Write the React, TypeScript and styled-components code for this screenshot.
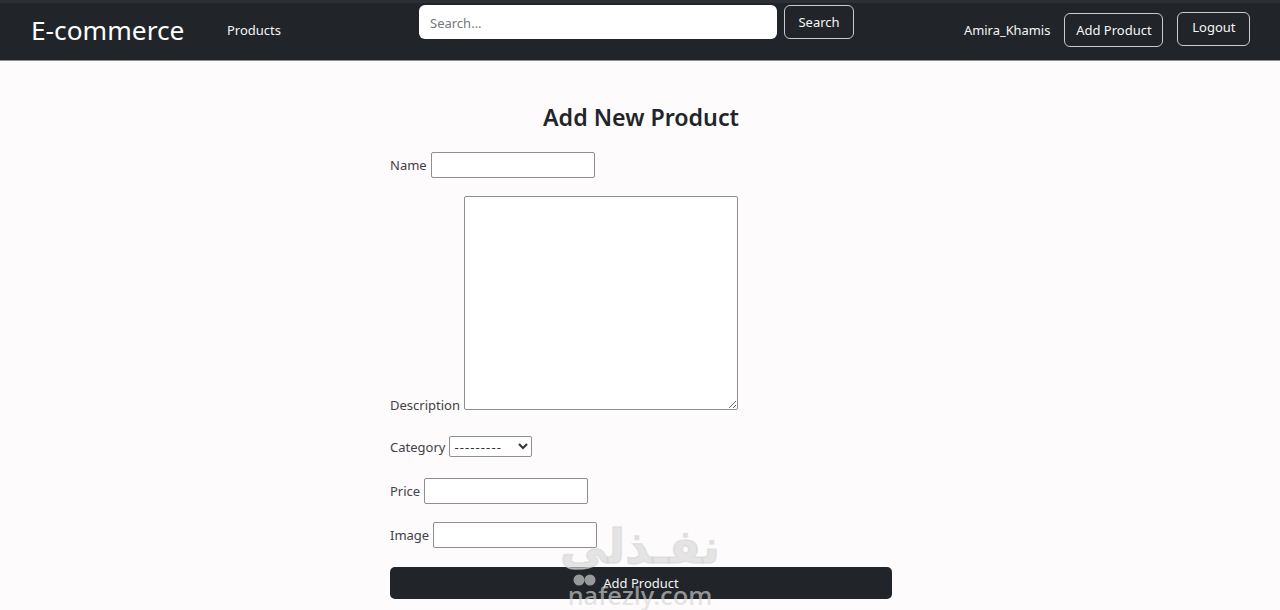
import React from 'react';
import styled, { createGlobalStyle } from 'styled-components';

const GlobalStyle = createGlobalStyle`
  html, body {
    margin: 0;
    padding: 0;
    background: #fdfbfc;
    font-family: "Noto Sans", "Open Sans", sans-serif;
    color: #3a3d41;
    overflow: hidden;
  }
`;

const Page = styled.div`
  width: 1280px;
  height: 610px;
  position: relative;
  overflow: hidden;
`;

const Navbar = styled.nav`
  height: 57px;
  border-top: 3px solid #2c2f33;
  border-bottom: 1px solid #8b8d90;
  background: #212529;
  display: flex;
  align-items: flex-start;
  color: #f4f5f6;
  box-sizing: content-box;
`;

const Brand = styled.a`
  margin: 8px 0 0 31px;
  width: 196px;
  font-size: 26.3px;
  line-height: 38px;
  color: #fff;
`;

const NavLink = styled.a`
  margin-top: 16px;
  width: 192px;
  font-size: 13px;
  line-height: 22px;
`;

const SearchForm = styled.form`
  display: flex;
  gap: 7px;
  margin-top: 2px;
`;

const SearchInput = styled.input`
  width: 358px;
  height: 34px;
  box-sizing: border-box;
  border: 0;
  border-radius: 6px;
  background: #fff;
  padding: 2px 11px 0;
  font: 13px "Noto Sans", sans-serif;
  &::placeholder {
    color: #73787d;
  }
`;

const NavButton = styled.button<{ $width: number; $top: number; $lift?: number }>`
  width: ${(p) => p.$width}px;
  height: 34px;
  margin-top: ${(p) => p.$top}px;
  box-sizing: border-box;
  border: 1px solid #c9cbcd;
  border-radius: 6px;
  background: transparent;
  color: #f4f5f6;
  font: 13px "Noto Sans", sans-serif;
  padding: 0 0 ${(p) => p.$lift ?? 0}px;
`;

const NavRight = styled.div`
  margin-left: 110px;
  display: flex;
  align-items: flex-start;
  gap: 14px;
`;

const UserName = styled.span`
  margin-top: 16px;
  font-size: 12.9px;
  line-height: 22px;
`;

const Content = styled.main`
  width: 502px;
  margin: 0 0 0 390px;
  padding-top: 40px;
`;

const Title = styled.h1`
  margin: 0 0 19px;
  font-size: 23.2px;
  line-height: 32px;
  font-weight: 600;
  color: #212529;
  text-align: center;
`;

const Row = styled.div<{ $gap: number }>`
  display: flex;
  align-items: baseline;
  gap: 4px;
  margin-bottom: ${(p) => p.$gap}px;
`;

// a textarea sits on the text baseline by its bottom edge, so this row is bottom aligned
const TallRow = styled(Row)`
  align-items: flex-end;
`;

const Label = styled.label`
  font-size: 13px;
  line-height: 22px;
  color: #3f4246;
`;

const TallLabel = styled(Label)`
  margin-bottom: -6px;
`;

const TextInput = styled.input`
  width: 164px;
  height: 26px;
  box-sizing: border-box;
  border: 1px solid #8f8f8f;
  border-radius: 2px;
  background: #fff;
`;

const TextArea = styled.textarea`
  display: block;
  width: 274px;
  height: 214px;
  box-sizing: border-box;
  border: 1px solid #8f8f8f;
  border-radius: 2px;
  background: #fff;
  margin: 0;
`;

const Select = styled.select`
  width: 83px;
  height: 21px;
  box-sizing: border-box;
  border: 1px solid #8f8f8f;
  border-radius: 2px;
  background: #fff;
  color: #333;
  font: 13px "Noto Sans", sans-serif;
  letter-spacing: 1.1px;
`;

const SubmitButton = styled.button`
  display: block;
  width: 100%;
  height: 32px;
  border: 0;
  border-radius: 5px;
  background: #212529;
  color: #f4f5f6;
  font: 13px "Noto Sans", sans-serif;
  padding: 0;
`;

const Watermark = styled.div`
  position: absolute;
  left: 550px;
  top: 520px;
  width: 180px;
  height: 90px;
  pointer-events: none;
  color: rgba(215, 215, 215, 0.65);
  text-align: center;
  font-weight: 700;
`;

const WatermarkArabic = styled.div`
  font-family: "DejaVu Sans", sans-serif;
  font-size: 47px;
  line-height: 54px;
  -webkit-text-stroke: 1.5px rgba(215, 215, 215, 0.65);
`;

const WatermarkLatin = styled.div`
  font-size: 25.5px;
  line-height: 26px;
  margin-top: 8px;
  font-weight: 500;
`;

const WatermarkDots = styled.svg`
  position: absolute;
  left: 23px;
  top: 54px;
`;

export default function App() {
  return (
    <Page>
      <GlobalStyle />
      <Navbar>
        <Brand>E-commerce</Brand>
        <NavLink>Products</NavLink>
        <SearchForm>
          <SearchInput placeholder="Search..." />
          <NavButton type="button" $width={70} $top={0}>Search</NavButton>
        </SearchForm>
        <NavRight>
          <UserName>Amira_Khamis</UserName>
          <NavButton type="button" $width={99} $top={10}>Add Product</NavButton>
          <NavButton type="button" $width={73} $top={9} $lift={4}>Logout</NavButton>
        </NavRight>
      </Navbar>
      <Content>
        <Title>Add New Product</Title>
        <Row $gap={18}>
          <Label>Name</Label>
          <TextInput />
        </Row>
        <TallRow $gap={26}>
          <TallLabel>Description</TallLabel>
          <TextArea />
        </TallRow>
        <Row $gap={20}>
          <Label>Category</Label>
          <Select>
            <option>---------</option>
          </Select>
        </Row>
        <Row $gap={18}>
          <Label>Price</Label>
          <TextInput />
        </Row>
        <Row $gap={19}>
          <Label>Image</Label>
          <TextInput />
        </Row>
        <SubmitButton type="button">Add Product</SubmitButton>
      </Content>
      <Watermark>
        <WatermarkArabic>نفـذلى</WatermarkArabic>
        <WatermarkDots width="24" height="12" viewBox="0 0 24 12">
          <circle cx="6" cy="6" r="5.5" fill="currentColor" />
          <circle cx="17" cy="6" r="5.5" fill="currentColor" />
        </WatermarkDots>
        <WatermarkLatin>nafezly.com</WatermarkLatin>
      </Watermark>
    </Page>
  );
}
